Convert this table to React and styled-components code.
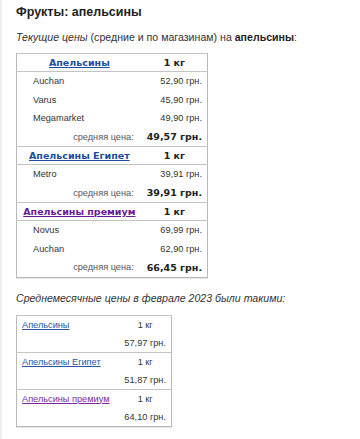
import React from "react";
import styled, { createGlobalStyle } from "styled-components";

const Global = createGlobalStyle`
  html, body { margin: 0; padding: 0; background: #fff; }
  body { font-family: "Liberation Sans", Arial, sans-serif; color: #333; }
`;

const Page = styled.div`
  width: 360px;
  height: 439px;
  box-sizing: border-box;
  border-left: 2px solid #ededed;
  padding: 4px 0 0 14px;
  overflow: hidden;
`;

const Title = styled.h1`
  margin: 0;
  font-size: 12.5px;
  line-height: 16px;
  font-weight: bold;
  color: #222;
`;

const Para = styled.p`
  margin: ${(p) => p.$mt}px 0 0 0;
  font-size: 10.6px;
  line-height: 14px;
  color: #333;
  em { font-style: italic; }
  b { font-weight: bold; color: #222; }
`;

const PriceTable = styled.table`
  margin-top: 9px;
  width: 192px;
  border-collapse: collapse;
  border: 1px solid #b8b8b8;
  box-shadow: 0 1px 0 #e6e6e6;
`;

const HeadCell = styled.th`
  height: 17px;
  padding: 0;
  border-top: 1px solid #c4c4c4;
  border-bottom: 1px solid #c4c4c4;
  font-family: "DejaVu Sans", Verdana, sans-serif;
  font-size: 9.5px;
  font-weight: bold;
  text-align: center;
  color: #222;
  width: ${(p) => p.$w || "auto"};
`;

const HeadLink = styled.a`
  color: ${(p) => (p.$visited ? "#6a1b9a" : "#1c4da1")};
  text-decoration: underline;
`;

const Cell = styled.td`
  height: 18.5px;
  padding: 0 5px 0 ${(p) => p.$pl || 5}px;
  font-size: 9.2px;
  color: #333;
  text-align: ${(p) => p.$align || "left"};
  white-space: nowrap;
`;

const AvgLabel = styled(Cell)`
  color: #555;
  padding-right: 8px;
`;

const AvgValue = styled(Cell)`
  font-family: "DejaVu Sans", Verdana, sans-serif;
  font-weight: bold;
  font-size: 9.5px;
  color: #222;
`;

const MonthTable = styled.table`
  margin-top: 10px;
  width: 156px;
  border-collapse: collapse;
  border: 1px solid #b8b8b8;
  box-shadow: 0 1px 0 #e6e6e6;
`;

const MonthBody = styled.tbody`
  border-top: 1px solid #c4c4c4;
`;

const MCell = styled.td`
  height: 18px;
  padding: 0 5px;
  font-size: 9.2px;
  color: #333;
  text-align: ${(p) => p.$align || "left"};
  white-space: nowrap;
  width: ${(p) => p.$w || "auto"};
`;

const MLink = styled.a`
  color: ${(p) => (p.$visited ? "#7b2a9e" : "#2a55a8")};
  text-decoration: underline;
`;

const groups = [
  {
    name: "Апельсины",
    stores: [
      ["Auchan", "52,90 грн."],
      ["Varus", "45,90 грн."],
      ["Megamarket", "49,90 грн."],
    ],
    avg: "49,57 грн.",
  },
  {
    name: "Апельсины Египет",
    stores: [["Metro", "39,91 грн."]],
    avg: "39,91 грн.",
  },
  {
    name: "Апельсины премиум",
    visited: true,
    stores: [
      ["Novus", "69,99 грн."],
      ["Auchan", "62,90 грн."],
    ],
    avg: "66,45 грн.",
  },
];

const monthly = [
  { name: "Апельсины", price: "57,97 грн." },
  { name: "Апельсины Египет", price: "51,87 грн." },
  { name: "Апельсины премиум", price: "64,10 грн.", visited: true },
];

export default function App() {
  return (
    <>
      <Global />
      <Page>
        <Title>Фрукты: апельсины</Title>
        <Para $mt={10}>
          <em>Текущие цены</em> (средние и по магазинам) на <b>апельсины</b>:
        </Para>
        <PriceTable>
          {groups.map((g) => (
            <tbody key={g.name}>
              <tr>
                <HeadCell $w="126px">
                  <HeadLink href="#" $visited={g.visited}>
                    {g.name}
                  </HeadLink>
                </HeadCell>
                <HeadCell>1 кг</HeadCell>
              </tr>
              {g.stores.map(([s, p]) => (
                <tr key={s}>
                  <Cell $pl={16}>{s}</Cell>
                  <Cell $align="right">{p}</Cell>
                </tr>
              ))}
              <tr>
                <AvgLabel $align="right">средняя цена:</AvgLabel>
                <AvgValue $align="right">{g.avg}</AvgValue>
              </tr>
            </tbody>
          ))}
        </PriceTable>
        <Para $mt={13}>
          <em>Среднемесячные цены в феврале 2023 были такими:</em>
        </Para>
        <MonthTable>
          {monthly.map((m) => (
            <MonthBody key={m.name}>
              <tr>
                <MCell $w="104px">
                  <MLink href="#" $visited={m.visited}>
                    {m.name}
                  </MLink>
                </MCell>
                <MCell $align="center">1 кг</MCell>
              </tr>
              <tr>
                <MCell />
                <MCell $align="right">{m.price}</MCell>
              </tr>
            </MonthBody>
          ))}
        </MonthTable>
      </Page>
    </>
  );
}
